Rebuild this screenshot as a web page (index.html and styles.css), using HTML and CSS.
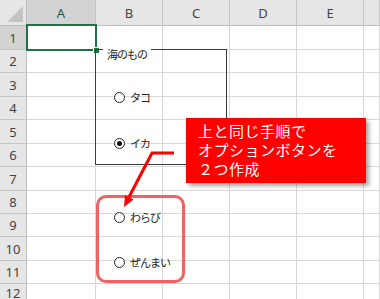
FILE: index.html
```html
<!DOCTYPE html>
<html lang="ja">
<head>
    <meta charset="UTF-8">
    <title>オプションボタン</title>
    <link rel="stylesheet" href="styles.css">
</head>
<body>
    <div class="sheet">
        <div class="grid">
            <div class="corner"><svg width="16" height="16" viewBox="0 0 16 16"><polygon points="16,0 16,16 0,16" fill="#c3c3c3"/></svg></div><div class="ch sel">A</div><div class="ch">B</div><div class="ch">C</div><div class="ch">D</div><div class="ch">E</div><div class="ch"></div>
            <div class="rh sel">1</div><div class="c"></div><div class="c"></div><div class="c"></div><div class="c"></div><div class="c"></div><div class="c"></div>
            <div class="rh">2</div><div class="c"></div><div class="c"></div><div class="c"></div><div class="c"></div><div class="c"></div><div class="c"></div>
            <div class="rh">3</div><div class="c"></div><div class="c"></div><div class="c"></div><div class="c"></div><div class="c"></div><div class="c"></div>
            <div class="rh">4</div><div class="c"></div><div class="c"></div><div class="c"></div><div class="c"></div><div class="c"></div><div class="c"></div>
            <div class="rh">5</div><div class="c"></div><div class="c"></div><div class="c"></div><div class="c"></div><div class="c"></div><div class="c"></div>
            <div class="rh">6</div><div class="c"></div><div class="c"></div><div class="c"></div><div class="c"></div><div class="c"></div><div class="c"></div>
            <div class="rh">7</div><div class="c"></div><div class="c"></div><div class="c"></div><div class="c"></div><div class="c"></div><div class="c"></div>
            <div class="rh">8</div><div class="c"></div><div class="c"></div><div class="c"></div><div class="c"></div><div class="c"></div><div class="c"></div>
            <div class="rh">9</div><div class="c"></div><div class="c"></div><div class="c"></div><div class="c"></div><div class="c"></div><div class="c"></div>
            <div class="rh">10</div><div class="c"></div><div class="c"></div><div class="c"></div><div class="c"></div><div class="c"></div><div class="c"></div>
            <div class="rh">11</div><div class="c"></div><div class="c"></div><div class="c"></div><div class="c"></div><div class="c"></div><div class="c"></div>
            <div class="rh">12</div><div class="c"></div><div class="c"></div><div class="c"></div><div class="c"></div><div class="c"></div><div class="c"></div>
        </div>

        <!-- selected cell A1 -->
        <div class="selection"><span class="handle"></span></div>

        <!-- group box -->
        <div class="group-box">
            <span class="group-caption">海のもの</span>
        </div>

        <label class="option opt-tako"><span class="radio"></span>タコ</label>
        <label class="option opt-ika"><span class="radio checked"></span>イカ</label>
        <label class="option opt-warabi"><span class="radio"></span>わらび</label>
        <label class="option opt-zenmai"><span class="radio"></span>ぜんまい</label>

        <div class="highlight"></div>

        <svg class="arrow" width="380" height="299" viewBox="0 0 380 299">
            <polyline points="174,153 152,153 129,197" fill="none" stroke="#ff0000" stroke-width="3"/>
            <polygon points="124,207 125,195 133.5,199.5" fill="#ff0000"/>
        </svg>

        <div class="callout">上と同じ手順で<br>オプションボタンを<br>２つ作成</div>
    </div>
</body>
</html>
```

FILE: styles.css
```css
body {
    margin: 0;
    padding: 0;
    background: #fff;
    font-family: "Noto Sans", "Noto Sans CJK JP", sans-serif;
}
.sheet {
    position: relative;
    width: 380px;
    height: 299px;
    overflow: hidden;
}
.grid {
    display: grid;
    grid-template-columns: 27px 69px 67px 67px 67px 67px 1fr;
    grid-template-rows: 26px 24px 23px 24px 23px 24px 23px 24px 23px 23px 24px 23px 1fr;
    height: 299px;
}
.grid > div {
    box-sizing: border-box;
}
.c {
    border-right: 1px solid #d9d9d9;
    border-bottom: 1px solid #d9d9d9;
}
.corner {
    background: #e6e6e6;
    border-right: 1px solid #bdbdbd;
    border-bottom: 1px solid #bdbdbd;
    display: flex;
    align-items: flex-end;
    justify-content: flex-end;
    padding: 0 3px 3px 0;
}
.ch, .rh {
    background: #e6e6e6;
    color: #444;
    font-size: 13px;
    display: flex;
    align-items: center;
    justify-content: center;
}
.ch {
    border-right: 1px solid #c6c6c6;
    border-bottom: 1px solid #bdbdbd;
}
.rh {
    border-right: 1px solid #bdbdbd;
    border-bottom: 1px solid #c6c6c6;
}
.ch.sel, .rh.sel {
    background: #d3d3d3;
    color: #245a42;
}
.selection {
    position: absolute;
    left: 26px;
    top: 24px;
    width: 67px;
    height: 23px;
    border: 2px solid #217346;
}
.handle {
    position: absolute;
    right: -5px;
    bottom: -5px;
    width: 5px;
    height: 5px;
    background: #217346;
    border: 1px solid #fff;
}
.group-box {
    position: absolute;
    left: 95px;
    top: 49px;
    width: 130px;
    height: 114px;
    border: 1px solid #3c3c3c;
}
.group-caption {
    position: absolute;
    left: 7px;
    top: -3px;
    padding: 0 4px;
    background: #fff;
    font-family: "Noto Sans CJK JP", sans-serif;
    font-size: 11px;
    line-height: 14px;
    letter-spacing: -1px;
    color: #222;
}
.option {
    position: absolute;
    left: 114px;
    display: flex;
    align-items: center;
    gap: 5px;
    font-family: "Noto Sans CJK JP", sans-serif;
    font-size: 11px;
    line-height: 12px;
    letter-spacing: -1px;
    color: #222;
}
.opt-tako { top: 91px; }
.opt-ika { top: 137px; }
.opt-warabi { top: 211px; }
.opt-zenmai { top: 256px; }
.radio {
    box-sizing: border-box;
    width: 11px;
    height: 11px;
    border: 1px solid #222;
    border-radius: 50%;
    background: #fff;
    display: flex;
    align-items: center;
    justify-content: center;
}
.radio.checked::after {
    content: "";
    width: 5px;
    height: 5px;
    border-radius: 50%;
    background: #111;
}
.highlight {
    position: absolute;
    left: 96px;
    top: 195px;
    width: 89px;
    height: 88px;
    box-sizing: border-box;
    border: 3px solid #f26262;
    border-radius: 10px;
}
.arrow {
    position: absolute;
    left: 0;
    top: 0;
}
.callout {
    position: absolute;
    left: 186px;
    top: 118px;
    width: 180px;
    height: 65px;
    box-sizing: border-box;
    padding: 3px 0 0 12px;
    background: #ff0000;
    box-shadow: 3px 3px 4px rgba(0, 0, 0, 0.35);
    color: #fff;
    font-family: "Noto Sans CJK JP", sans-serif;
    font-size: 15px;
    line-height: 19px;
    letter-spacing: 0.5px;
}
```
